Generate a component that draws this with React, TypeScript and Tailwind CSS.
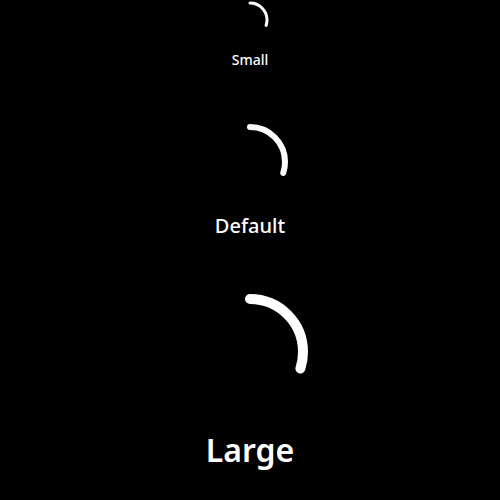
import React from 'react'

type SpinnerProps = {
  size: number
  radius: number
  stroke: number
  className?: string
}

// 원호 스피너: 둘레의 30%만 그린다
function Spinner({ size, radius, stroke, className }: SpinnerProps) {
  const c = 2 * Math.PI * radius
  const mid = size / 2
  return (
    <svg width={size} height={size} viewBox={`0 0 ${size} ${size}`} className={className}>
      <circle
        cx={mid}
        cy={mid}
        r={radius}
        fill="none"
        stroke="#ffffff"
        strokeWidth={stroke}
        strokeLinecap="round"
        strokeDasharray={`${c * 0.3} ${c}`}
        transform={`rotate(-90 ${mid} ${mid})`}
      />
    </svg>
  )
}

export default function App() {
  return (
    <div className="min-h-screen bg-black flex flex-col items-center font-['Noto_Sans',sans-serif] text-white">
      {/* Small */}
      <Spinner size={40} radius={17} stroke={3} />
      <p className="mt-2.5 text-sm leading-5 font-medium">Small</p>

      {/* Default */}
      <Spinner size={76} radius={35} stroke={6} className="mt-[54px]" />
      <p className="mt-3 text-xl leading-7 font-medium">Default</p>

      {/* Large */}
      <Spinner size={136} radius={53} stroke={10} className="mt-[44px]" />
      <p className="mt-3 text-[32px] leading-9 font-semibold">Large</p>
    </div>
  )
}
